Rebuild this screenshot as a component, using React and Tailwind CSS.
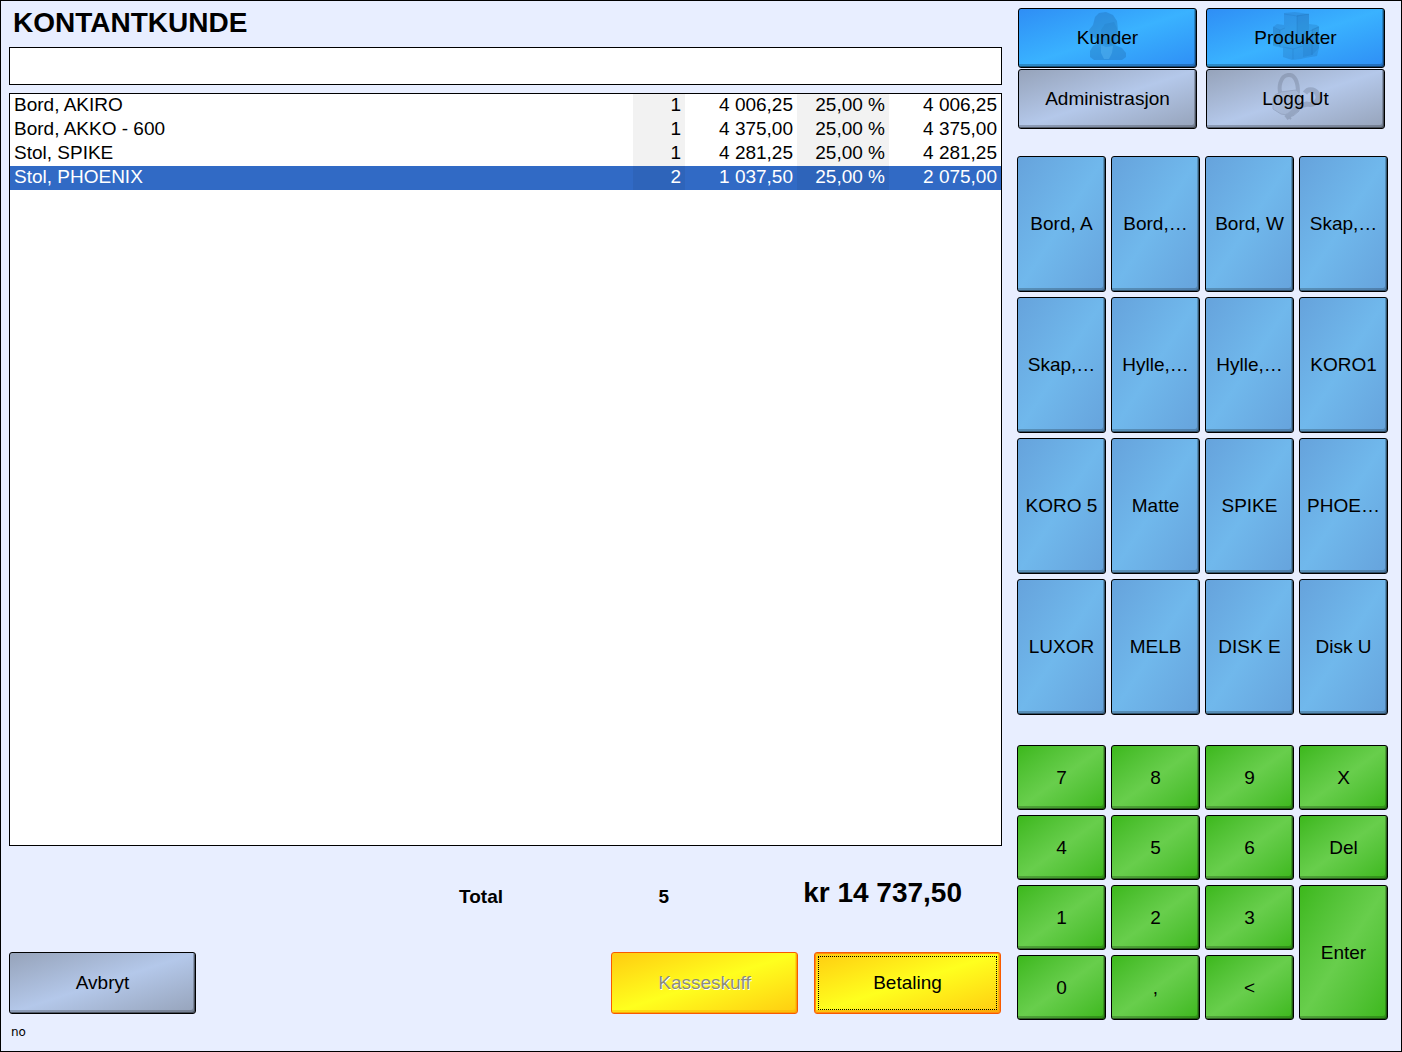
import React, { useState } from 'react';

const lines = [
    { name: 'Bord, AKIRO', qty: '1', price: '4 006,25', vat: '25,00 %', sum: '4 006,25' },
    { name: 'Bord, AKKO - 600', qty: '1', price: '4 375,00', vat: '25,00 %', sum: '4 375,00' },
    { name: 'Stol, SPIKE', qty: '1', price: '4 281,25', vat: '25,00 %', sum: '4 281,25' },
    { name: 'Stol, PHOENIX', qty: '2', price: '1 037,50', vat: '25,00 %', sum: '2 075,00' },
];

const products = [
    'Bord, A', 'Bord,…', 'Bord, W', 'Skap,…',
    'Skap,…', 'Hylle,…', 'Hylle,…', 'KORO1',
    'KORO 5', 'Matte', 'SPIKE', 'PHOE…',
    'LUXOR', 'MELB', 'DISK E', 'Disk U',
];

const keys = ['7', '8', '9', 'X', '4', '5', '6', 'Del', '1', '2', '3', 'Enter', '0', ',', '<'];

const tones = {
    blue: 'border-black from-[#2f8ef5] via-[#3ab2ff] to-[#2f8ef5]',
    steel: 'border-black from-[#96a3ba] via-[#b4c8ea] to-[#96a3ba]',
    sky: 'border-black from-[#66a3dc] via-[#70b8ec] to-[#66a3dc]',
    green: 'border-black from-[#3cb81a] via-[#68ce4c] to-[#3cb81a]',
    yellow: 'border-[#f85a00] from-[#ffcc10] via-[#ffff1e] to-[#ffcc10]',
};

const bevels = {
    dark: 'shadow-[inset_-1px_-1px_0_rgba(0,0,0,0.4),inset_-2px_-3px_0_rgba(0,0,0,0.22)]',
    warm: 'shadow-[inset_-1px_-1px_0_rgba(248,140,0,0.6),inset_-2px_-3px_0_rgba(248,160,0,0.35)]',
    focus: 'shadow-[inset_0_0_0_1px_#ff8c10,inset_-2px_-3px_0_rgba(248,140,0,0.5)]',
};

const PosButton = ({ tone, bevel = 'dark', className = '', icon, children, ...props }) => (
    <button
        type="button"
        className={`relative flex items-center justify-center rounded-[3px] border bg-linear-to-br outline-none ${tones[tone]} ${bevels[bevel]} ${className}`}
        {...props}
    >
        {icon}
        <span className="relative whitespace-nowrap">{children}</span>
    </button>
);

// Faint watermark behind the button label
const Watermark = ({ children, ...props }) => (
    <svg
        className="absolute left-1/2 top-[3px] -translate-x-1/2"
        width="48"
        height="48"
        viewBox="0 0 48 48"
        aria-hidden="true"
        {...props}
    >
        {children}
    </svg>
);

const CustomerIcon = () => (
    <Watermark fill="#14508c">
        <path opacity=".24" d="M15 1l7-1 7 3 4 6 1 9 2 6-2 6-3 3 7 3 4 5v4l-4 3H10l-4-3v-6l3-5 5-3-3-5-5-3-1-5 4-5 2-8z" />
        <path opacity=".1" d="M21 12l9-2 3 6-1 10-4 7h-6l-4-6-1-9z" />
        <path fill="#6ccaff" opacity=".3" d="M17 33l5 2 7-1-1 7-3 6h-5l-3-6z" />
    </Watermark>
);

const ProductIcon = () => (
    <Watermark fill="#14508c">
        <path opacity=".18" d="M12 1l11-1 14 2v10l8 1 2 2v21l-2 8-12 2-4 1-9 1-9-3V36L1 34V15l4-3 7 1z" />
        <path opacity=".12" d="M25 3l12-1v28l-12 2zM40 17l7-3v22l-7 7zM1 16l7 2v16l-7-1zM31 32l9-3v14l-9 2z" />
        <path fill="none" stroke="#14508c" opacity=".14" d="M12 2l13 2 12-2M25 4v28M1 15l7 3 5-2M11 35l10 2 10-3M21 37v10M31 22l9-4 7-3M40 18v25M8 18v17" />
    </Watermark>
);

const LockIcon = () => (
    <Watermark fill="none" stroke="#5a6478" strokeLinejoin="round">
        <g opacity=".28">
            <path strokeWidth="4" d="M9 22C6 15 8 3 16 2c7-1 10 7 10 18" />
            <path fill="#8a97ad" strokeWidth="1" d="M3 22l6-3 15-2 3 3v18l-6 5-12-2-8-5V25z" />
            <path strokeWidth="5" d="M33 20c4-6 12-3 13 3s-5 10-11 8l-7 2-14 12" />
            <path strokeWidth="2" d="M14 41l5 5M21 35l4 4" />
        </g>
    </Watermark>
);

const App = () => {
    const [search, setSearch] = useState('');
    const [selected, setSelected] = useState(3);

    return (
        <div className="flex min-h-screen gap-4 border border-black bg-[#e8eeff] pl-2 pr-[13px] font-['Liberation_Sans',Arial,sans-serif] text-[19px] leading-6 text-black">
            <main className="-mr-px flex min-w-0 flex-1 flex-col">
                <h1 className="px-1 pt-1 text-[28px] font-bold leading-9">KONTANTKUNDE</h1>
                <input
                    type="text"
                    aria-label="Søk"
                    value={search}
                    onChange={(e) => setSearch(e.target.value)}
                    className="mt-1.5 h-[38px] w-full border border-black bg-white px-1 outline-none"
                />

                <div className="mt-2 flex-1 border border-black bg-white">
                    <table className="w-full table-fixed border-collapse leading-[22px]">
                        <colgroup>
                            <col />
                            <col className="w-[52px]" />
                            <col className="w-28" />
                            <col className="w-[92px]" />
                            <col className="w-28" />
                        </colgroup>
                        <tbody>
                            {lines.map((line, i) => (
                                <tr
                                    key={line.name}
                                    onClick={() => setSelected(i)}
                                    className={i === selected ? 'bg-[#316ac5] text-white' : ''}
                                >
                                    <td className="px-1 pb-0.5">{line.name}</td>
                                    <td className="bg-black/5 px-1 pb-0.5 text-right">{line.qty}</td>
                                    <td className="px-1 pb-0.5 text-right">{line.price}</td>
                                    <td className="bg-black/5 px-1 pb-0.5 text-right">{line.vat}</td>
                                    <td className="px-1 pb-0.5 text-right">{line.sum}</td>
                                </tr>
                            ))}
                        </tbody>
                    </table>
                </div>

                {/* Totals */}
                <div className="flex h-[106px] items-center justify-end pb-1 pr-10 font-bold">
                    <span>Total</span>
                    <span className="w-[166px] text-right">5</span>
                    <span className="w-[293px] pb-2 text-right text-[28px]">kr 14 737,50</span>
                </div>

                <div className="flex gap-4 pr-px">
                    <PosButton tone="steel" className="mr-auto h-[62px] w-[187px]">Avbryt</PosButton>
                    <PosButton
                        tone="yellow"
                        bevel="warm"
                        disabled
                        className="h-[62px] w-[187px] text-[#8c8c78] [text-shadow:1px_1px_0_#fff]"
                    >
                        Kasseskuff
                    </PosButton>
                    <PosButton
                        tone="yellow"
                        bevel="focus"
                        className="h-[62px] w-[187px]"
                        icon={<span className="absolute inset-[3px] border border-dotted border-black" />}
                    >
                        Betaling
                    </PosButton>
                </div>
                <footer className="h-[37px] px-0.5 pt-1.5 font-['DejaVu_Sans',sans-serif] text-xs leading-6">no</footer>
            </main>

            <aside className="w-[371px] shrink-0 pb-[31px] pt-[7px]">
                <div className="grid grid-cols-2 gap-x-[9px] gap-y-px pl-px pr-[3px]">
                    <PosButton tone="blue" className="h-15" icon={<CustomerIcon />}>Kunder</PosButton>
                    <PosButton tone="blue" className="h-15" icon={<ProductIcon />}>Produkter</PosButton>
                    <PosButton tone="steel" className="h-15">Administrasjon</PosButton>
                    <PosButton tone="steel" className="h-15" icon={<LockIcon />}>Logg Ut</PosButton>
                </div>

                <div className="mt-[27px] grid grid-cols-4 gap-[5px]">
                    {products.map((name, i) => (
                        <PosButton key={i} tone="sky" className="h-34">{name}</PosButton>
                    ))}
                </div>

                <div className="mt-[30px] grid grid-cols-4 gap-[5px]">
                    {keys.map((key) => (
                        <PosButton key={key} tone="green" className={key === 'Enter' ? 'row-span-2' : 'h-[65px]'}>
                            {key}
                        </PosButton>
                    ))}
                </div>
            </aside>
        </div>
    );
};

export default App;
